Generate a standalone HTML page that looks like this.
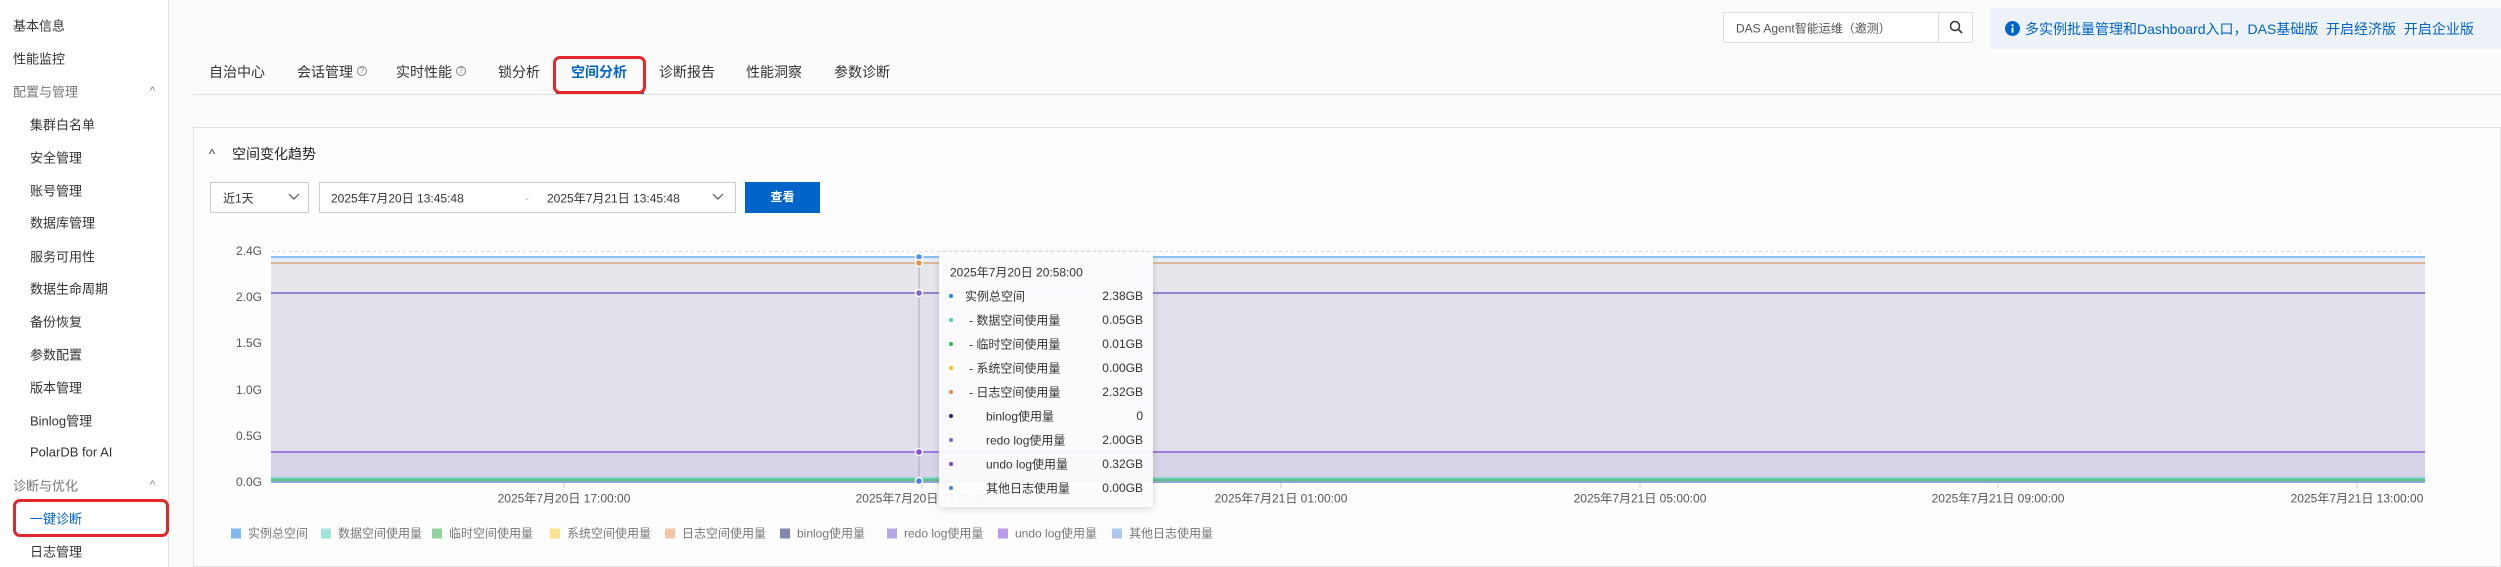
<!DOCTYPE html>
<html><head><meta charset="utf-8"><style>
*{margin:0;padding:0;box-sizing:border-box}
body{width:2501px;height:567px;overflow:hidden;background:#fbfbfb;font-family:"Liberation Sans","Noto Sans CJK SC",sans-serif;color:#333;position:relative}
.a{position:absolute;white-space:nowrap}
.side{position:absolute;left:0;top:0;width:169px;height:567px;background:#fff;border-right:1px solid #e3e3e3}
.si{position:absolute;font-size:13px;color:#333;transform:translateY(-50%)}
.sg{color:#777}
.tab{position:absolute;top:72px;transform:translateY(-50%);font-size:14px;color:#333}
.q{display:inline-block;width:10px;height:10px;border:1px solid #888;border-radius:50%;font-size:8px;line-height:8px;text-align:center;color:#888;vertical-align:4px}
.tt{position:absolute;font-size:12px;color:#333;transform:translateY(-50%)}
.lg{position:absolute;top:533px;transform:translateY(-50%);font-size:12px;color:#777;display:flex;align-items:center}
.lg i{display:inline-block;width:10px;height:10px;margin-right:7px}
.yl{position:absolute;left:236px;font-size:12px;color:#555;transform:translateY(-50%)}
.xl{position:absolute;top:498px;font-size:12px;color:#555;transform:translate(-50%,-50%)}
</style></head><body>
<div class="side">
<div class="si" style="left:13px;top:25px">基本信息</div>
<div class="si" style="left:13px;top:58px">性能监控</div>
<div class="si sg" style="left:13px;top:91px">配置与管理</div>
<div class="si sg" style="left:150px;top:91px;font-size:11px">^</div>
<div class="si" style="left:30px;top:124px">集群白名单</div>
<div class="si" style="left:30px;top:157px">安全管理</div>
<div class="si" style="left:30px;top:190px">账号管理</div>
<div class="si" style="left:30px;top:222px">数据库管理</div>
<div class="si" style="left:30px;top:256px">服务可用性</div>
<div class="si" style="left:30px;top:288px">数据生命周期</div>
<div class="si" style="left:30px;top:321px">备份恢复</div>
<div class="si" style="left:30px;top:354px">参数配置</div>
<div class="si" style="left:30px;top:387px">版本管理</div>
<div class="si" style="left:30px;top:420px">Binlog管理</div>
<div class="si" style="left:30px;top:452px">PolarDB for AI</div>
<div class="si sg" style="left:13px;top:485px">诊断与优化</div>
<div class="si sg" style="left:150px;top:485px;font-size:11px">^</div>
<div class="si" style="left:30px;top:518px;color:#0064c8">一键诊断</div>
<div class="si" style="left:30px;top:551px">日志管理</div>
</div>
<div class="a" style="left:13px;top:499px;width:156px;height:38px;border:3px solid #e5262a;border-radius:7px"></div>

<div class="tab" style="left:209px">自治中心</div>
<div class="tab" style="left:297px">会话管理 <span class="q">?</span></div>
<div class="tab" style="left:396px">实时性能 <span class="q">?</span></div>
<div class="tab" style="left:498px">锁分析</div>
<div class="tab" style="left:571px;color:#0064c8;font-weight:bold">空间分析</div>
<div class="tab" style="left:659px">诊断报告</div>
<div class="tab" style="left:746px">性能洞察</div>
<div class="tab" style="left:834px">参数诊断</div>
<div class="a" style="left:193px;top:94px;width:2308px;height:1px;background:#e3e3e3"></div>
<div class="a" style="left:556px;top:92px;width:88px;height:2px;background:#0064c8"></div>
<div class="a" style="left:553px;top:56px;width:93px;height:38px;border:3px solid #e5262a;border-radius:7px"></div>

<div class="a" style="left:1723px;top:12px;width:250px;height:31px;border:1px solid #ddd;background:#fff"></div>
<div class="a" style="left:1938px;top:12px;width:1px;height:31px;background:#ddd"></div>
<div class="a" style="left:1736px;top:28px;transform:translateY(-50%);font-size:12px;color:#555">DAS Agent智能运维（邀测）</div>
<svg class="a" style="left:1949px;top:20px" width="14" height="14" viewBox="0 0 14 14"><circle cx="6" cy="6" r="4.5" fill="none" stroke="#333" stroke-width="1.5"/><path d="M9.3 9.3L13 13" stroke="#333" stroke-width="1.6"/></svg>
<div class="a" style="left:1990px;top:8px;width:511px;height:41px;background:#edf1f8"></div>
<svg class="a" style="left:2005px;top:21px" width="15" height="15" viewBox="0 0 16 16"><circle cx="8" cy="8" r="8" fill="#0064c8"/><rect x="7" y="7" width="2" height="5.5" fill="#fff"/><circle cx="8" cy="4.6" r="1.2" fill="#fff"/></svg>
<div class="a" style="left:2025px;top:29px;transform:translateY(-50%);font-size:14px;color:#0064c8">多实例批量管理和Dashboard入口，DAS基础版&nbsp; 开启经济版&nbsp; 开启企业版</div>

<div class="a" style="left:193px;top:127px;width:2308px;height:440px;border:1px solid #e3e3e3;background:#fdfdfd"></div>
<div class="a" style="left:209px;top:154px;transform:translateY(-50%);font-size:13px;color:#333">^</div>
<div class="a" style="left:232px;top:154px;transform:translateY(-50%);font-size:14px;color:#222">空间变化趋势</div>
<div class="a" style="left:210px;top:182px;width:99px;height:31px;border:1px solid #ccc;background:#fff"></div>
<div class="a" style="left:223px;top:198px;transform:translateY(-50%);font-size:12px">近1天</div>
<svg class="a" style="left:288px;top:193px" width="12" height="8"><path d="M1 1L6 6L11 1" fill="none" stroke="#555" stroke-width="1.2"/></svg>
<div class="a" style="left:319px;top:182px;width:417px;height:31px;border:1px solid #ccc;background:#fff"></div>
<div class="a" style="left:331px;top:198px;transform:translateY(-50%);font-size:12px">2025年7月20日 13:45:48</div>
<div class="a" style="left:525px;top:198px;transform:translateY(-50%);font-size:12px;color:#aaa">-</div>
<div class="a" style="left:547px;top:198px;transform:translateY(-50%);font-size:12px">2025年7月21日 13:45:48</div>
<svg class="a" style="left:712px;top:193px" width="12" height="8"><path d="M1 1L6 6L11 1" fill="none" stroke="#555" stroke-width="1.2"/></svg>
<div class="a" style="left:745px;top:182px;width:75px;height:31px;background:#0064c8;color:#fff;font-size:12px;font-weight:bold;text-align:center;line-height:31px">查看</div>

<svg class="a" style="left:0;top:0" width="2501" height="567">
<g stroke="#ddd" stroke-dasharray="3,3">
<line x1="271" x2="2425" y1="251.5" y2="251.5"/><line x1="271" x2="2425" y1="297.5" y2="297.5"/>
<line x1="271" x2="2425" y1="343.5" y2="343.5"/><line x1="271" x2="2425" y1="390.5" y2="390.5"/>
<line x1="271" x2="2425" y1="436.5" y2="436.5"/></g>
<rect x="271" y="257" width="2154" height="6" fill="#e5edf7"/>
<rect x="271" y="263" width="2154" height="30" fill="#e6e6ec"/>
<rect x="271" y="293" width="2154" height="159" fill="#e0dfea"/>
<rect x="271" y="452" width="2154" height="26" fill="#d9d3e8"/>
<line x1="271" x2="2425" y1="257" y2="257" stroke="#6aaaf0" stroke-width="1.5"/>
<line x1="271" x2="2425" y1="263" y2="263" stroke="#e0a57e" stroke-width="1.5"/>
<line x1="271" x2="2425" y1="293" y2="293" stroke="#7a66c8" stroke-width="1.5"/>
<line x1="271" x2="2425" y1="452" y2="452" stroke="#8a5ad8" stroke-width="1.5"/>
<rect x="271" y="477" width="2154" height="2" fill="#7fd6d0"/>
<rect x="271" y="479" width="2154" height="2" fill="#5cbf7a"/>
<rect x="271" y="481" width="2154" height="2" fill="#8fa6d6"/>
<g stroke="#ccc"><line x1="564" x2="564" y1="483" y2="488"/><line x1="922" x2="922" y1="483" y2="488"/><line x1="1281" x2="1281" y1="483" y2="488"/><line x1="1640" x2="1640" y1="483" y2="488"/><line x1="1998" x2="1998" y1="483" y2="488"/><line x1="2357" x2="2357" y1="483" y2="488"/></g>
<line x1="919" x2="919" y1="255" y2="482" stroke="#aaa"/>
<g stroke="#fff" stroke-width="1.5">
<circle cx="919" cy="257" r="3.5" fill="#4a90f0"/><circle cx="919" cy="263" r="3.5" fill="#e0925e"/>
<circle cx="919" cy="293" r="3.5" fill="#7a66c8"/><circle cx="919" cy="452" r="3.5" fill="#8a4ae0"/>
<circle cx="919" cy="481" r="3.5" fill="#4a80e0"/></g>
</svg>
<div class="yl" style="top:251px">2.4G</div><div class="yl" style="top:297px">2.0G</div>
<div class="yl" style="top:343px">1.5G</div><div class="yl" style="top:390px">1.0G</div>
<div class="yl" style="top:436px">0.5G</div><div class="yl" style="top:482px">0.0G</div>
<div class="xl" style="left:564px">2025年7月20日 17:00:00</div>
<div class="xl" style="left:922px">2025年7月20日 21:00:00</div>
<div class="xl" style="left:1281px">2025年7月21日 01:00:00</div>
<div class="xl" style="left:1640px">2025年7月21日 05:00:00</div>
<div class="xl" style="left:1998px">2025年7月21日 09:00:00</div>
<div class="xl" style="left:2357px">2025年7月21日 13:00:00</div>

<div class="a" style="left:939px;top:252px;width:214px;height:255px;background:rgba(252,252,254,0.95);border-radius:4px;box-shadow:0 2px 8px rgba(0,0,0,0.15)"></div>
<div class="tt" style="left:950px;top:272px">2025年7月20日 20:58:00</div>
<svg class="a" style="left:948px;top:290px" width="8" height="200"><g>
<circle cx="3" cy="6" r="2" fill="#1e88f5"/><circle cx="3" cy="30" r="2" fill="#3fd6c0"/><circle cx="3" cy="54" r="2" fill="#2db84a"/><circle cx="3" cy="78" r="2" fill="#f5c211"/><circle cx="3" cy="102" r="2" fill="#e88a50"/><circle cx="3" cy="126" r="2" fill="#1f2a6a"/><circle cx="3" cy="150" r="2" fill="#7a66c8"/><circle cx="3" cy="174" r="2" fill="#8a3ae0"/><circle cx="3" cy="198" r="2" fill="#4a80e0"/></g></svg>
<div class="tt" style="left:965px;top:296px">实例总空间</div><div class="tt" style="right:1358px;top:296px">2.38GB</div>
<div class="tt" style="left:969px;top:320px">- 数据空间使用量</div><div class="tt" style="right:1358px;top:320px">0.05GB</div>
<div class="tt" style="left:969px;top:344px">- 临时空间使用量</div><div class="tt" style="right:1358px;top:344px">0.01GB</div>
<div class="tt" style="left:969px;top:368px">- 系统空间使用量</div><div class="tt" style="right:1358px;top:368px">0.00GB</div>
<div class="tt" style="left:969px;top:392px">- 日志空间使用量</div><div class="tt" style="right:1358px;top:392px">2.32GB</div>
<div class="tt" style="left:986px;top:416px">binlog使用量</div><div class="tt" style="right:1358px;top:416px">0</div>
<div class="tt" style="left:986px;top:440px">redo log使用量</div><div class="tt" style="right:1358px;top:440px">2.00GB</div>
<div class="tt" style="left:986px;top:464px">undo log使用量</div><div class="tt" style="right:1358px;top:464px">0.32GB</div>
<div class="tt" style="left:986px;top:488px">其他日志使用量</div><div class="tt" style="right:1358px;top:488px">0.00GB</div>

<div class="lg" style="left:231px"><i style="background:#82b8f4"></i>实例总空间</div>
<div class="lg" style="left:321px"><i style="background:#a2e3dc"></i>数据空间使用量</div>
<div class="lg" style="left:432px"><i style="background:#92d4a0"></i>临时空间使用量</div>
<div class="lg" style="left:550px"><i style="background:#fbe28e"></i>系统空间使用量</div>
<div class="lg" style="left:665px"><i style="background:#f3c6a4"></i>日志空间使用量</div>
<div class="lg" style="left:780px"><i style="background:#8088ac"></i>binlog使用量</div>
<div class="lg" style="left:887px"><i style="background:#b6a8e8"></i>redo log使用量</div>
<div class="lg" style="left:998px"><i style="background:#bc98f0"></i>undo log使用量</div>
<div class="lg" style="left:1112px"><i style="background:#aec6f0"></i>其他日志使用量</div>
</body></html>
